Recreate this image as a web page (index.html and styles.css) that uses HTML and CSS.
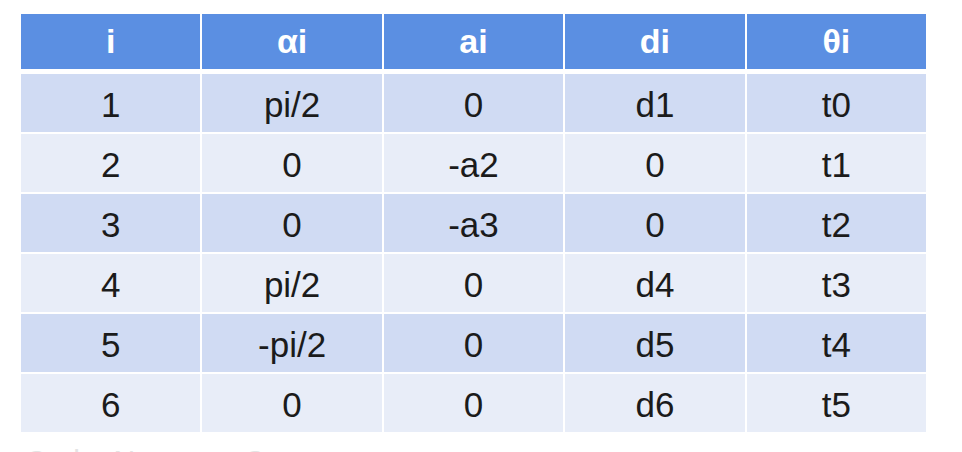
FILE: index.html
```html
<!DOCTYPE html>
<html>
<head>
<meta charset="utf-8">
<link rel="stylesheet" href="styles.css">
</head>
<body>
<div class="page">
  <div class="dh-table">
    <div class="cell head">i</div>
    <div class="cell head">αi</div>
    <div class="cell head">ai</div>
    <div class="cell head">di</div>
    <div class="cell head">θi</div>

    <div class="cell odd">1</div><div class="cell odd">pi/2</div><div class="cell odd">0</div><div class="cell odd">d1</div><div class="cell odd">t0</div>
    <div class="cell even">2</div><div class="cell even">0</div><div class="cell even">-a2</div><div class="cell even">0</div><div class="cell even">t1</div>
    <div class="cell odd">3</div><div class="cell odd">0</div><div class="cell odd">-a3</div><div class="cell odd">0</div><div class="cell odd">t2</div>
    <div class="cell even">4</div><div class="cell even">pi/2</div><div class="cell even">0</div><div class="cell even">d4</div><div class="cell even">t3</div>
    <div class="cell odd">5</div><div class="cell odd">-pi/2</div><div class="cell odd">0</div><div class="cell odd">d5</div><div class="cell odd">t4</div>
    <div class="cell even">6</div><div class="cell even">0</div><div class="cell even">0</div><div class="cell even">d6</div><div class="cell even">t5</div>
  </div>
  <div class="caption">Code  Name      Q</div>
</div>
</body>
</html>
```

FILE: styles.css
```css
html, body {
  margin: 0;
  padding: 0;
  background: #ffffff;
  overflow: hidden;
}

.page {
  width: 962px;
  height: 452px;
  padding: 14px 0 0 21px;
  box-sizing: border-box;
  overflow: hidden;
  font-family: "Liberation Sans", Arial, sans-serif;
}

.dh-table {
  width: 905px;
  display: grid;
  grid-template-columns: repeat(5, 1fr);
  grid-template-rows: 58px repeat(6, 58px);
  column-gap: 2px;
  row-gap: 2px;
}

.cell {
  display: flex;
  align-items: center;
  justify-content: center;
  font-size: 35px;
  color: #1b1b1b;
  padding-top: 3px;
  box-sizing: border-box;
}

.head {
  background: #5b8fe2;
  color: #ffffff;
  font-weight: bold;
  font-size: 34px;
  align-self: start;
  height: 55px;
  padding-top: 0;
}

.odd {
  background: #d0dbf3;
}

.even {
  background: #e8edf8;
}

.caption {
  margin-top: 12px;
  margin-left: 4px;
  font-size: 30px;
  line-height: 34px;
  color: #e4e4e4;
  white-space: pre;
}
```
